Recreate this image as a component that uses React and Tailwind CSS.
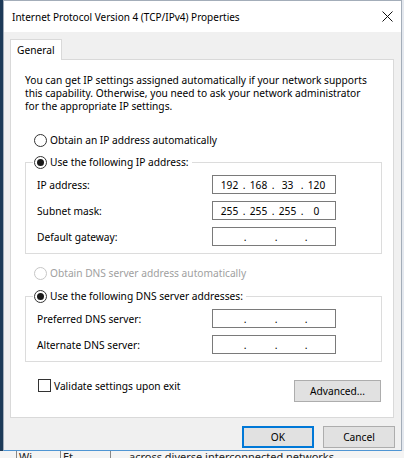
import React from 'react';

const Radio = ({ checked, disabled }) => (
  <span
    className={`w-[13px] h-[13px] rounded-full border flex items-center justify-center bg-white shrink-0 ${
      disabled ? 'border-[#c6c6c6]' : 'border-[#333333]'
    }`}
  >
    {checked && <span className="w-[7px] h-[7px] rounded-full bg-[#1a1a1a]" />}
  </span>
);

const IpBox = ({ parts }) => (
  <div className="w-[124px] h-[19px] border border-[#7a7a7a] bg-white flex items-center">
    {parts ? (
      <div className="flex items-center pl-[5px]">
        {parts.map((p, i) => (
          <React.Fragment key={i}>
            <span className="w-[23px] text-center">{p}</span>
            {i < 3 && <span className="w-[6px] text-center">.</span>}
          </React.Fragment>
        ))}
      </div>
    ) : (
      <div className="flex items-center">
        <span className="w-[29px]" />
        <span className="w-[6px] text-center">.</span>
        <span className="w-[25px]" />
        <span className="w-[6px] text-center">.</span>
        <span className="w-[24px]" />
        <span className="w-[6px] text-center">.</span>
      </div>
    )}
  </div>
);

const FieldRow = ({ label, parts }) => (
  <div className="flex items-center h-[19px]">
    <span className="w-[186px] pl-[11px]">{label}</span>
    <IpBox parts={parts} />
  </div>
);

const Group = ({ title, children }) => (
  <fieldset className="ml-[14px] mr-[11px] border border-[#dcdcdc] pb-[7px]">
    <legend className="ml-[7px] pl-[1px] pr-[3px]">
      <div className="flex items-center h-[16px] gap-[3px]">
        <Radio checked />
        <span>{title}</span>
      </div>
    </legend>
    <div className="flex flex-col gap-[7px] pt-[5px]">{children}</div>
  </fieldset>
);

const Button = ({ children, primary, className = '' }) => (
  <div
    className={`h-[22px] flex items-center justify-center bg-[#e1e1e1] ${
      primary ? 'border-2 border-[#0078d7]' : 'border border-[#adadad]'
    } ${className}`}
  >
    {children}
  </div>
);

export default function App() {
  return (
    <div className="w-[404px] h-[458px] overflow-hidden flex flex-col bg-white text-black text-[10.2px] leading-[16px] whitespace-nowrap font-['Noto_Sans',sans-serif]">
      <div className="flex h-[451px]">
        <div className="w-[3px] bg-[#1d3a58]" />
        <div className="flex-1 flex flex-col border border-[#a3adb9] border-b-[#4f95d3]">
          {/* title bar */}
          <div className="h-[31px] bg-white flex items-center justify-between pl-[8px] pr-[8px]">
            <span className="text-[10px]">Internet Protocol Version 4 (TCP/IPv4) Properties</span>
            <svg width="11" height="11" viewBox="0 0 11 11">
              <path d="M0.5 0.5 L10.5 10.5 M10.5 0.5 L0.5 10.5" stroke="#111" strokeWidth="1" />
            </svg>
          </div>

          <div className="flex-1 bg-[#f0f0f0] pt-[7px] pl-[6px] pr-[6px] flex flex-col">
            {/* tab */}
            <div className="flex">
              <div className="relative z-10 -mb-[1px] w-[52px] h-[21px] bg-white border border-b-0 border-[#d9d9d9] pl-[6px] flex items-center">
                General
              </div>
            </div>

            {/* panel */}
            <div className="h-[359px] mr-[1px] bg-white border border-[#d9d9d9] flex flex-col">
              <p className="pl-[14px] pt-[14px] leading-[13px]">
                You can get IP settings assigned automatically if your network supports
                <br />
                this capability. Otherwise, you need to ask your network administrator
                <br />
                for the appropriate IP settings.
              </p>

              <div className="mt-[19px] pl-[23px] flex items-center h-[16px] gap-[3px]">
                <Radio />
                <span>Obtain an IP address automatically</span>
              </div>

              <div className="mt-[6px]">
                <Group title="Use the following IP address:">
                  <FieldRow label="IP address:" parts={['192', '168', '33', '120']} />
                  <FieldRow label="Subnet mask:" parts={['255', '255', '255', '0']} />
                  <FieldRow label="Default gateway:" />
                </Group>
              </div>

              <div className="mt-[11px] pl-[23px] flex items-center h-[16px] gap-[3px] text-[#a0a0a0]">
                <Radio disabled />
                <span>Obtain DNS server address automatically</span>
              </div>

              <div className="mt-[7px]">
                <Group title="Use the following DNS server addresses:">
                  <FieldRow label="Preferred DNS server:" />
                  <FieldRow label="Alternate DNS server:" />
                </Group>
              </div>

              <div className="mt-[17px] pl-[27px] pr-[12px] flex items-start justify-between">
                <div className="flex items-center gap-[3px] h-[13px]">
                  <span className="w-[13px] h-[13px] border border-[#333333] bg-white" />
                  <span>Validate settings upon exit</span>
                </div>
                <Button className="w-[87px] h-[21px] mt-[1px]">Advanced...</Button>
              </div>
            </div>

            {/* footer */}
            <div className="flex justify-end gap-[9px] mt-[8px]">
              <Button primary className="w-[72px]">OK</Button>
              <Button className="w-[72px]">Cancel</Button>
            </div>
          </div>
        </div>
        <div className="w-[2px] bg-[#e4e8ee]" />
      </div>
      <div className="h-[7px] overflow-hidden bg-[#f4f4f4] flex items-start text-[11px] leading-[12px] text-[#222]">
        <span className="ml-[16px] w-[44px] border-l border-[#888] pl-[2px]">Wi</span>
        <span className="w-[20px] border-l border-[#888] pl-[2px]">Et</span>
        <span className="ml-[30px] border-l border-[#888] pl-[18px]">across diverse interconnected networks</span>
      </div>
    </div>
  );
}
